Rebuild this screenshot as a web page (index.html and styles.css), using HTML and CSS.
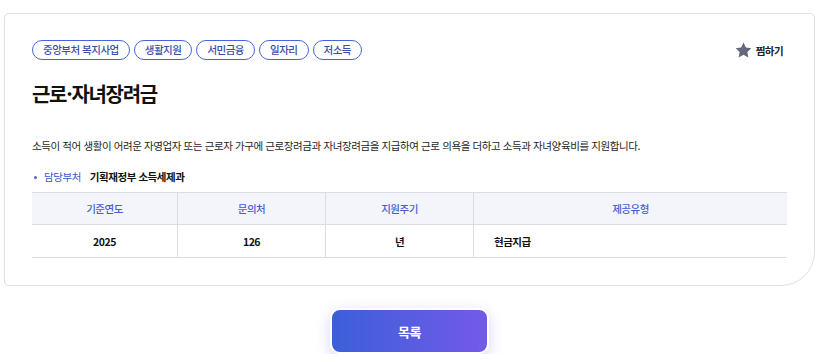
FILE: index.html
```html
<!DOCTYPE html>
<html lang="ko">
<head>
  <meta charset="UTF-8" />
  <meta name="viewport" content="width=device-width, initial-scale=1.0"/>
  <title>근로·자녀장려금</title>
  <link rel="stylesheet" href="styles.css">
</head>
<body>
  <div class="card">
    <div class="top">
      <div class="tags">
        <span class="tag">중앙부처 복지사업</span>
        <span class="tag">생활지원</span>
        <span class="tag">서민금융</span>
        <span class="tag">일자리</span>
        <span class="tag">저소득</span>
      </div>
      <button class="fav">
        <svg width="17" height="16" viewBox="0 0 24 23"><path d="M12 0.8l3.4 7.2 7.9 1-5.8 5.5 1.5 7.8L12 18.4l-7 3.9 1.5-7.8L0.7 9l7.9-1z" fill="#63677c"/></svg>
        <span>찜하기</span>
      </button>
    </div>

    <h2>근로·자녀장려금</h2>

    <p class="desc">소득이 적어 생활이 어려운 자영업자 또는 근로자 가구에 근로장려금과 자녀장려금을 지급하여 근로 의욕을 더하고 소득과 자녀양육비를 지원합니다.</p>

    <div class="dept"><span class="dot"></span><span class="dept-label">담당부처</span><strong>기획재정부 소득세제과</strong></div>

    <table class="info">
      <thead>
        <tr><th class="c1">기준연도</th><th class="c2">문의처</th><th class="c3">지원주기</th><th>제공유형</th></tr>
      </thead>
      <tbody>
        <tr><td>2025</td><td>126</td><td>년</td><td class="left">현금지급</td></tr>
      </tbody>
    </table>
  </div>

  <div class="actions">
    <button class="list-btn">목록</button>
  </div>
</body>
</html>
```

FILE: styles.css
```css
body {
  font-family: 'Noto Sans CJK KR', 'Noto Sans', sans-serif;
  background: #fff;
  color: #222;
  margin: 0;
  padding: 13px 8px 0 4px;
}
.card {
  border: 1px solid #e0e0e3;
  border-radius: 5px 5px 34px 5px;
  padding: 26px 27px 27px 27px;
}
.top {
  display: flex;
  justify-content: space-between;
  align-items: center;
}
.tags {
  display: flex;
  gap: 4px;
}
.tag {
  display: inline-block;
  height: 20px;
  line-height: 18px;
  box-sizing: border-box;
  padding: 0 10px;
  border: 1px solid #4765d8;
  border-radius: 10px;
  font-size: 10.5px;
  letter-spacing: -0.5px;
  color: #3a4cab;
  font-weight: 500;
}
.fav {
  display: flex;
  align-items: center;
  gap: 4px;
  background: none;
  border: none;
  padding: 0;
  margin-right: 4px;
  font-family: inherit;
  font-size: 10.5px;
  font-weight: bold;
  letter-spacing: -0.6px;
  color: #222;
}
h2 {
  margin: 21px 0 0;
  font-size: 20px;
  line-height: 26px;
  letter-spacing: -1.3px;
  color: #111;
  font-weight: bold;
}
.desc {
  margin: 31px 0 0;
  font-size: 10.5px;
  line-height: 16px;
  letter-spacing: -0.4px;
  color: #1e1e1e;
}
.dept {
  display: flex;
  align-items: center;
  margin-top: 15px;
  font-size: 10.5px;
  line-height: 16px;
  letter-spacing: -0.45px;
}
.dot {
  width: 3px;
  height: 3px;
  border-radius: 50%;
  background: #4c63d6;
  margin: 0 7px 0 2px;
}
.dept-label {
  color: #3d55d0;
  margin-right: 9px;
}
.dept strong {
  color: #111;
  font-weight: 600;
}
.info {
  width: 100%;
  table-layout: fixed;
  border-collapse: collapse;
  margin-top: 7px;
  font-size: 10.5px;
  letter-spacing: -0.5px;
}
.info th, .info td {
  border: 1px solid #dcdde3;
  text-align: center;
  padding: 0;
}
.info tr > :first-child { border-left: none; }
.info tr > :last-child { border-right: none; }
.info th {
  background: #f4f5fa;
  color: #4b5dd5;
  font-weight: 500;
  height: 31px;
}
.info td {
  height: 32px;
  font-weight: bold;
  color: #111;
}
.info td.left {
  text-align: left;
  padding-left: 20px;
}
.c1 { width: 145px; }
.c2 { width: 147px; }
.c3 { width: 147px; }
.actions {
  display: flex;
  justify-content: center;
  margin-top: 22px;
}
.list-btn {
  width: 159px;
  height: 46px;
  border: 2px solid #fff;
  border-radius: 10px;
  background: linear-gradient(90deg, #3c5fd8, #735ae9);
  color: #fff;
  font-family: inherit;
  font-size: 13px;
  font-weight: bold;
  letter-spacing: -0.5px;
  box-shadow: 0 4px 14px rgba(110, 100, 230, 0.28);
}
```
